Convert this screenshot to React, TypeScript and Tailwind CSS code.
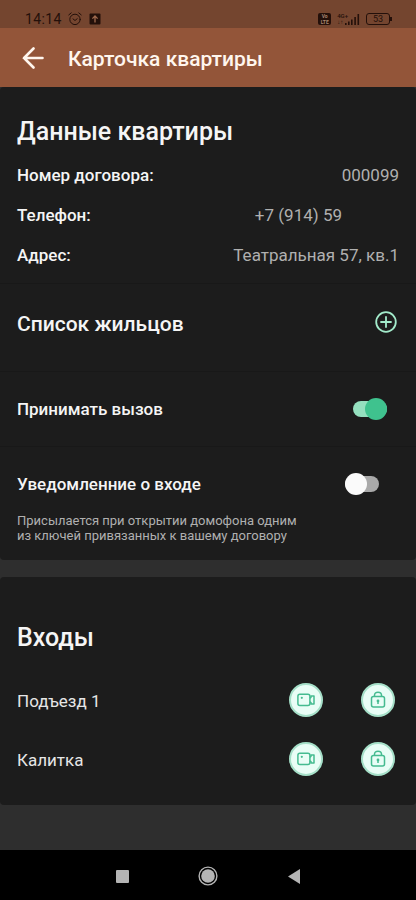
import { useState, type ReactNode } from "react";

function StatusBar() {
  return (
    <div className="flex h-7 items-end justify-between bg-[#74452f] pr-6 pb-px pl-[25px] text-[#24100a]">
      <div className="flex items-center gap-1.5">
        <span className="text-sm leading-4 tracking-wide">14:14</span>
        <svg className="h-3.5 w-3.5" viewBox="0 0 14 14" fill="none" stroke="currentColor" strokeLinecap="round" aria-hidden="true">
          <circle cx="7" cy="7.4" r="5.2" strokeWidth="1" />
          <path d="M5 6.9l2 1.6 2.2-1.8" strokeWidth="1" />
          <path d="M.8 2.9L3.2.9M13.2 2.9L10.8.9" strokeWidth="1" />
        </svg>
        <svg className="h-3.5 w-3.5" viewBox="0 0 14 14" aria-hidden="true">
          <rect x="1.5" y="1.5" width="11" height="11" rx="1" fill="currentColor" />
          <path d="M7 10.5V4.3M4.4 6.6L7 4l2.6 2.6" fill="none" stroke="#a06a4e" strokeWidth="1.3" />
        </svg>
      </div>
      <div className="flex h-4 items-center gap-1.5">
        <span className="flex h-3 w-[13px] flex-col items-center justify-center rounded-xs bg-[#24100a] text-[5px] leading-[6px] font-bold text-[#a98670]">
          <span>Vo</span>
          <span>LTE</span>
        </span>
        <span className="flex h-3 items-end">
          <span className="flex h-3 flex-col justify-between text-[6px] leading-[6px] font-medium">
            <span>4G+</span>
            <span>↓↑</span>
          </span>
          <svg className="-ml-1 h-3 w-4" viewBox="0 0 16 12" fill="currentColor" aria-hidden="true">
            <path d="M1 10h1.600v2H1zM4 8.500h1.600V12H4zM7 6.500h1.600V12H7zM10.300 4h1.600v8h-1.600zM13.500 1h1.600v11h-1.600z" />
          </svg>
        </span>
        <span className="flex items-center">
          <span className="flex h-3 w-6 items-center justify-center rounded-[3px] border border-current text-[9px] leading-[10px]">53</span>
          <span className="h-1 w-0.5 bg-current" />
        </span>
      </div>
    </div>
  );
}

function InfoRow({ label, value, masked }: { label: string; value: string; masked?: boolean }) {
  return (
    <div className="flex h-10 items-center justify-between">
      <dt className="font-medium text-[#f5f5f5]">{label}</dt>
      <dd className={masked ? "pr-[57px] text-[#b0b0b0]" : "text-[#b0b0b0]"}>{value}</dd>
    </div>
  );
}

function Switch({ id, checked, onChange }: { id: string; checked: boolean; onChange: (v: boolean) => void }) {
  return (
    <input
      id={id}
      type="checkbox"
      role="switch"
      checked={checked}
      onChange={(e) => onChange(e.target.checked)}
      className="relative h-[22px] w-[34px] shrink-0 appearance-none before:absolute before:inset-x-0 before:top-[3px] before:h-4 before:rounded-full before:bg-[#a9a9a9] after:absolute after:top-0 after:left-0 after:size-[22px] after:rounded-full after:bg-[#fafafa] checked:before:bg-[#95e0bf] checked:after:left-3 checked:after:bg-[#3fc28e]"
    />
  );
}

function RoundButton({ label, children }: { label: string; children: ReactNode }) {
  return (
    <button
      type="button"
      aria-label={label}
      className="flex size-[34px] items-center justify-center rounded-full border-2 border-[#a5dfc8] bg-[#e9fdf6] text-[#45bb90]"
    >
      {children}
    </button>
  );
}

function CameraIcon() {
  return (
    <svg className="h-[14px] w-[18px]" viewBox="0 0 18 14" fill="none" stroke="currentColor" strokeWidth="1.500" aria-hidden="true">
      <rect x="0.900" y="1.200" width="12" height="11.200" rx="2" />
      <path d="M12.900 5.200L14 4.300V3h3v8h-3V9.700l-1.100-.9" strokeLinejoin="round" />
      <circle cx="4.800" cy="4.800" r="1.100" fill="currentColor" stroke="none" />
    </svg>
  );
}

function LockIcon() {
  return (
    <svg className="h-[17px] w-4" viewBox="0 0 16 17" fill="none" stroke="currentColor" strokeWidth="1.500" aria-hidden="true">
      <rect x="1.500" y="5.500" width="13" height="10.500" rx="2" />
      <path d="M4.500 5.500V4.300C4.500 2.300 5.800 1.200 8 1.200s3.500 1.100 3.500 3.100v1.200" />
      <circle cx="8" cy="9.900" r="1.400" fill="currentColor" stroke="none" />
      <path d="M8 10v3" />
    </svg>
  );
}

function EntranceRow({ name }: { name: string }) {
  return (
    <li className="flex h-[59px] items-center justify-between pr-1">
      <span className="text-[#e6e6e6]">{name}</span>
      <span className="flex gap-[38px] pb-0.5">
        <RoundButton label={`Камера: ${name}`}>
          <CameraIcon />
        </RoundButton>
        <RoundButton label={`Открыть: ${name}`}>
          <LockIcon />
        </RoundButton>
      </span>
    </li>
  );
}

export default function App() {
  const [calls, setCalls] = useState(true);
  const [notify, setNotify] = useState(false);

  return (
    <div className="flex min-h-screen flex-col bg-[#2e2e2e] font-['Roboto',sans-serif] text-[17px] leading-5 text-[#f5f5f5]">
      <StatusBar />
      <header className="flex h-[59px] items-center gap-6 bg-[#935539] px-[22px] text-[#fff6ee]">
        <button type="button" aria-label="Назад">
          <svg className="size-[22px]" viewBox="0 0 22 22" fill="none" stroke="currentColor" strokeWidth="2.600" strokeLinecap="round" aria-hidden="true">
            <path d="M20.500 11H2M11.500 1.500L2 11l9.500 9.500" />
          </svg>
        </button>
        <h1 className="pt-0.5 text-[21px] leading-6 font-medium">Карточка квартиры</h1>
      </header>

      <main className="flex flex-1 flex-col gap-[17px]">
        <section className="rounded-[4px] bg-[#1c1c1c]">
          <div className="border-b border-[#181818] px-[17px] pt-[29px] pb-2">
            <h2 className="text-[25px] leading-8 font-medium">Данные квартиры</h2>
            <dl className="mt-[7px]">
              <InfoRow label="Номер договора:" value="000099" />
              <InfoRow label="Телефон:" value="+7 (914) 59" masked />
              <InfoRow label="Адрес:" value="Театральная 57, кв.1" />
            </dl>
          </div>

          <div className="flex h-[88px] items-start justify-between border-b border-[#181818] px-[17px] pt-6">
            <h2 className="pt-0.5 text-[21px] leading-7 font-medium">Список жильцов</h2>
            <button type="button" aria-label="Добавить жильца" className="flex h-7 items-center pr-0.5 text-[#a3ebcb]">
              <svg className="size-[22px]" viewBox="0 0 22 22" fill="none" stroke="currentColor" strokeWidth="1.800" strokeLinecap="round" aria-hidden="true">
                <circle cx="11" cy="11" r="9.800" />
                <path d="M11 6v10M6 11h10" />
              </svg>
            </button>
          </div>

          <div className="flex h-[75px] items-center justify-between border-b border-[#181818] pr-[29px] pl-[17px]">
            <label htmlFor="calls" className="font-medium">Принимать вызов</label>
            <Switch id="calls" checked={calls} onChange={setCalls} />
          </div>

          <div className="pt-[26px] pb-[17px] pl-[17px]">
            <div className="flex h-[22px] items-center justify-between pr-[37px]">
              <label htmlFor="notify" className="font-medium">Уведомленние о входе</label>
              <Switch id="notify" checked={notify} onChange={setNotify} />
            </div>
            <p className="mt-[18px] max-w-[290px] text-[13px] leading-[15px] text-[#b0b0b0]">
              Присылается при открытии домофона одним из ключей привязанных к вашему договору
            </p>
          </div>
        </section>

        <section className="rounded-[4px] bg-[#1c1c1c] px-[17px] pt-[45px] pb-4">
          <h2 className="text-[25px] leading-8 font-medium">Входы</h2>
          <ul className="mt-[17px]">
            <EntranceRow name="Подъезд 1" />
            <EntranceRow name="Калитка" />
          </ul>
        </section>
      </main>

      <nav aria-label="Системная навигация" className="flex h-[50px] justify-center bg-black pt-0.5 text-[#b4b4b4]">
        <button type="button" aria-label="Недавние" className="flex w-[86px] items-center justify-center">
          <span className="size-[13px] rounded-[1px] bg-current" />
        </button>
        <button type="button" aria-label="Домой" className="flex w-[86px] items-center justify-center">
          <svg className="size-5" viewBox="0 0 20 20" fill="none" stroke="currentColor" aria-hidden="true">
            <circle cx="10" cy="10" r="8.900" strokeWidth="1.400" />
            <circle cx="10" cy="10" r="6.800" fill="currentColor" stroke="none" />
          </svg>
        </button>
        <button type="button" aria-label="Назад в системе" className="flex w-[86px] items-center justify-center">
          <svg className="h-[15px] w-3" viewBox="0 0 12 15" fill="currentColor" aria-hidden="true">
            <path d="M12 0v15L0 7.500z" />
          </svg>
        </button>
      </nav>
    </div>
  );
}
